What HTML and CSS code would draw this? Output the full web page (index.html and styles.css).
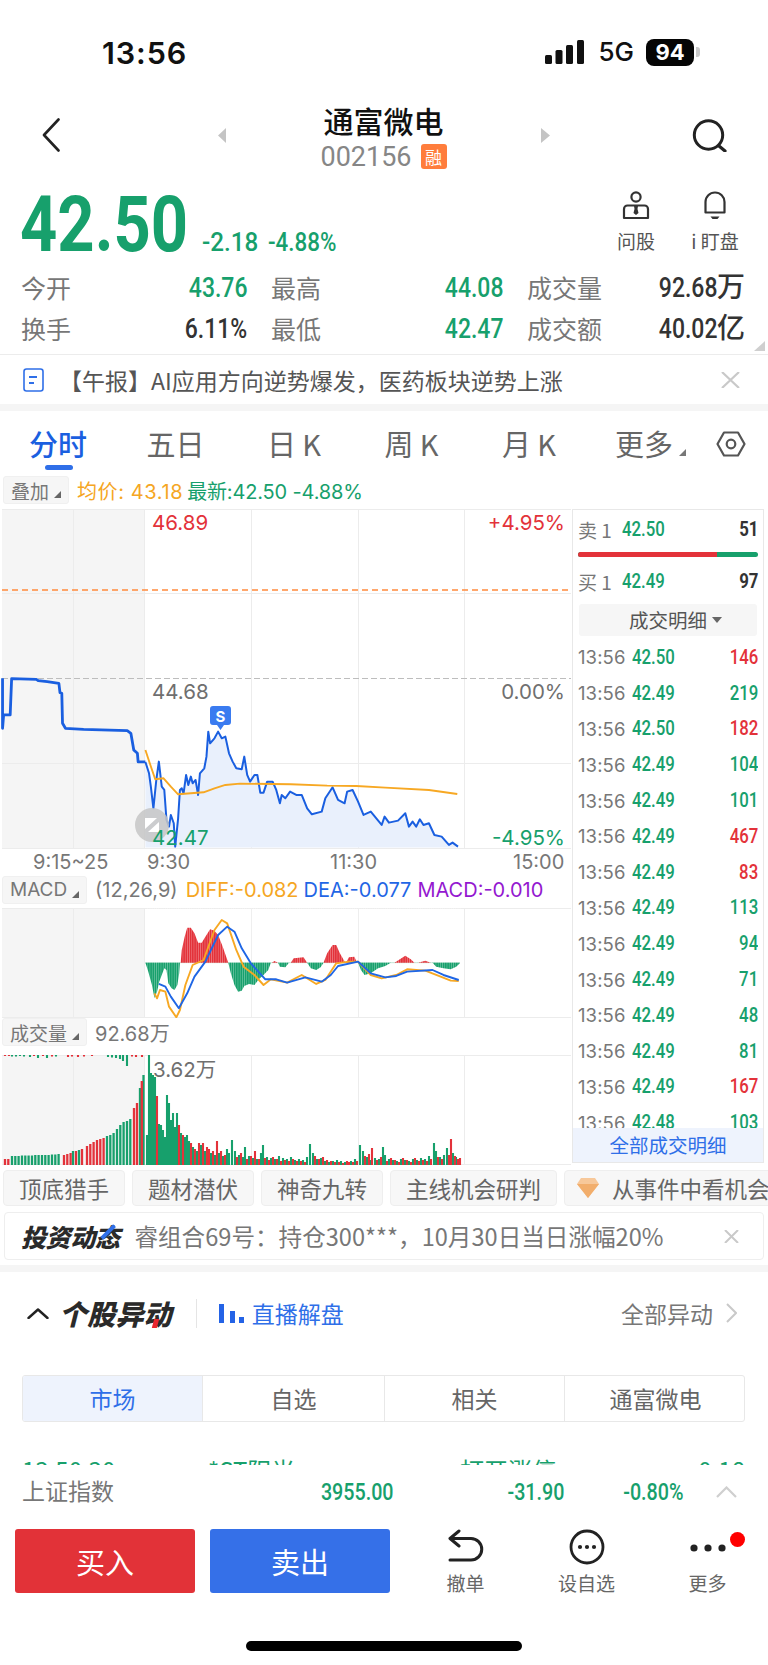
FILE: index.html
```html
<!DOCTYPE html>
<html lang="zh-CN">
<head>
<meta charset="utf-8">
<title>通富微电 002156</title>
<link rel="stylesheet" href="styles.css">
</head>
<body>
<div class="page">

<header class="status">
  <div class="time">13:56</div>
  <div class="status-right">
    <svg class="signal" width="39" height="24" viewBox="0 0 39 24"><rect x="0" y="15" width="7" height="9" rx="1.5"/><rect x="10.5" y="10" width="7" height="14" rx="1.5"/><rect x="21" y="5" width="7" height="19" rx="1.5"/><rect x="32" y="0" width="7" height="24" rx="1.5"/></svg>
    <span class="net">5G</span>
    <span class="batt">94</span><span class="batt-tip"></span>
  </div>
</header>

<nav class="nav">
  <svg width="18" height="34" viewBox="0 0 18 34"><path class="ic" d="M16.5 1.5 2 17l14.5 15.5" stroke-width="2.6"/></svg>
  <span></span>
  <svg width="8" height="15" viewBox="0 0 8 15"><path d="M8 0v15L0 7.5z" fill="#c4c4c4"/></svg>
  <div class="title-wrap">
    <div class="title">通富微电</div>
    <div class="code-row"><span class="code">002156</span><span class="rong">融</span></div>
  </div>
  <svg width="9" height="15" viewBox="0 0 9 15"><path d="M0 0v15l9-7.5z" fill="#c4c4c4"/></svg>
  <span></span>
  <svg width="35" height="33" viewBox="0 0 35 33"><circle class="ic" cx="16.5" cy="16" r="14.2" stroke-width="3"/><path class="ic" d="M27 27l6 5" stroke-width="3.2"/></svg>
</nav>

<section class="quote">
  <div class="price din">42.50</div>
  <div class="change"><span class="din">-2.18</span><span class="din">-4.88%</span></div>
  <div class="quick">
    <div class="quick-item">
      <svg width="28" height="29" viewBox="0 0 28 29"><circle class="ic2" cx="14" cy="6" r="4.6"/><path class="ic2" d="M2 27V18a3.5 3.5 0 0 1 3.5-3.500h17A3.500 3.500 0 0 1 26 18v9z"/><path d="M12 15h4l-.5 3 1 4-2.500 2-2.500-2 1-4z" fill="#333"/></svg>
      <span>问股</span>
    </div>
    <div class="quick-item">
      <svg width="24" height="29" viewBox="0 0 24 29"><path class="ic2" d="M2.500 21.500V11a9.500 9.500 0 0 1 19 0v10.500z"/><path d="M7.500 25.500h9l-2 2.500h-5z" fill="#333"/></svg>
      <span>i 盯盘</span>
    </div>
  </div>
</section>

<section class="stats">
  <span class="lbl">今开</span><span class="val green"><i class="din-r">43.76</i></span>
  <span class="lbl lbl-m">最高</span><span class="val green"><i class="din-r">44.08</i></span>
  <span class="lbl lbl-m">成交量</span><span class="val dark"><i class="din-r">92.68</i>万</span>
  <span class="lbl">换手</span><span class="val dark"><i class="din-r">6.11%</i></span>
  <span class="lbl lbl-m">最低</span><span class="val green"><i class="din-r">42.47</i></span>
  <span class="lbl lbl-m">成交额</span><span class="val dark"><i class="din-r">40.02</i>亿</span>
  <svg class="corner" width="11" height="10" viewBox="0 0 11 10"><path d="M11 0v10H0z" fill="#cfcfcf"/></svg>
</section>

<section class="notice">
  <svg width="21" height="24" viewBox="0 0 21 24"><rect x="1" y="1" width="19" height="22" rx="2.500" fill="none" stroke="#2f6fe8" stroke-width="1.600"/><path d="M6 9h8M6 15h5" stroke="#2f6fe8" stroke-width="1.800"/></svg>
  <span class="notice-text">【午报】AI应用方向逆势爆发，医药板块逆势上涨</span>
  <svg class="notice-x" width="19" height="16" viewBox="0 0 19 16"><path d="M1 0l17 16M18 0 1 16" stroke="#c9c9c9" stroke-width="2.200" fill="none"/></svg>
</section>
<div class="band band-a"></div>

<div class="period">
  <span class="tab active">分时</span>
  <span class="tab">五日</span>
  <span class="tab">日 K</span>
  <span class="tab">周 K</span>
  <span class="tab">月 K</span>
  <span class="tab tab-more">更多<i class="tri tri-dark"></i></span>
  <svg class="hex" width="30" height="26" viewBox="0 0 30 26"><path class="ic3" d="M8 1.500h14L28.500 13 22 24.500H8L1.500 13z"/><circle class="ic3" cx="15" cy="13" r="4.300"/></svg>
</div>

<div class="legend legend-top">
  <span class="pill pill-a">叠加<i class="tri"></i></span>
  <span class="orange avg-txt">均价: 43.18</span>
  <span class="green last-txt">最新:42.50 -4.88%</span>
</div>

<div class="market">
  <div class="charts">
    <svg class="plot" width="571" height="340" viewBox="0 0 571 340">
      <rect x="2" y="0" width="143" height="340" fill="#f5f5f5"/>
      <path class="grid" d="M2 .5H571M2 84.500H571M2 254.500H571M2 339.500H571M73.500 0V340M144.500 0V340M251.500 0V340M358.500 0V340M464.500 0V340"/>
      <path d="M2 81H571" fill="none" stroke="#ff8a3c" stroke-width="1.500" stroke-dasharray="6 4"/>
      <path d="M2 169.500H571" fill="none" stroke="#bdbdbd" stroke-width="1" stroke-dasharray="6 3"/>
      <g transform="translate(0 -99) scale(.3635 .3333)">
        <polygon fill="#e9f0fc" points="400,1313 400,1056 410,1090 415,1130 422,1195 430,1110 437,1055 445,1130 452,1140 458,1230 465,1250 470,1215 478,1240 482,1310 490,1225 495,1140 500,1135 505,1150 512,1095 518,1125 525,1100 530,1120 538,1110 545,1155 550,1090 562,1075 568,1040 573,965 578,1000 590,985 600,965 610,985 620,980 630,1030 640,1055 650,1075 665,1078 672,1040 680,1095 688,1115 700,1095 708,1095 716,1148 725,1148 735,1115 750,1115 760,1140 770,1180 775,1155 785,1165 798,1145 815,1155 830,1155 845,1195 858,1213 885,1205 895,1165 915,1132 930,1170 948,1180 955,1145 970,1140 985,1175 1000,1215 1020,1205 1050,1245 1058,1220 1070,1238 1095,1232 1115,1210 1125,1250 1135,1235 1145,1250 1155,1228 1165,1245 1180,1240 1195,1275 1215,1280 1235,1305 1245,1298 1260,1310 1260,1313"/>
        <polyline class="line line-pre" points="7,805 7,955 10,915 28,915 32,806 100,808 105,812 130,815 162,820 165,848 170,850 172,940 180,955 230,958 350,962 360,970 368,1020 378,1030 380,1056 400,1056"/>
        <polyline class="line" points="400,1056 410,1090 415,1130 422,1195 430,1110 437,1055 445,1130 452,1140 458,1230 465,1250 470,1215 478,1240 482,1310 490,1225 495,1140 500,1135 505,1150 512,1095 518,1125 525,1100 530,1120 538,1110 545,1155 550,1090 562,1075 568,1040 573,965 578,1000 590,985 600,965 610,985 620,980 630,1030 640,1055 650,1075 665,1078 672,1040 680,1095 688,1115 700,1095 708,1095 716,1148 725,1148 735,1115 750,1115 760,1140 770,1180 775,1155 785,1165 798,1145 815,1155 830,1155 845,1195 858,1213 885,1205 895,1165 915,1132 930,1170 948,1180 955,1145 970,1140 985,1175 1000,1215 1020,1205 1050,1245 1058,1220 1070,1238 1095,1232 1115,1210 1125,1250 1135,1235 1145,1250 1155,1228 1165,1245 1180,1240 1195,1275 1215,1280 1235,1305 1245,1298 1260,1310"/>
        <polyline class="line line-avg" points="400,1020 412,1060 427,1108 450,1105 470,1130 490,1153 560,1147 590,1135 620,1125 660,1121 800,1123 900,1127 980,1128 1060,1133 1180,1140 1258,1152"/>
      </g>
      <circle cx="152" cy="316" r="17" fill="#c6c6c6" opacity=".85"/>
      <path d="M145 309h12l-12 11zM159 313v10h-11z" fill="#fff"/>
      <path d="M213 197h15a3 3 0 0 1 3 3v13a3 3 0 0 1-3 3h-4l-3.500 5-3.500-5h-4a3 3 0 0 1-3-3v-13a3 3 0 0 1 3-3z" fill="#3a7bf0"/>
      <text class="mk" x="220.500" y="213">S</text>
      <text class="lb red" x="152" y="20.500">46.89</text>
      <text class="lb end red" x="565" y="20.500">+4.95%</text>
      <text class="lb gray" x="152" y="190">44.68</text>
      <text class="lb end gray" x="565" y="190">0.00%</text>
      <text class="lb green" x="152" y="336">42.47</text>
      <text class="lb end green" x="565" y="336">-4.95%</text>
    </svg>

    <div class="axis"><span>9:15~25</span><span>9:30</span><span>11:30</span><span>15:00</span></div>

    <div class="legend legend-sub">
      <span class="pill pill-b">MACD<i class="tri"></i></span>
      <span class="gray">(12,26,9)</span>
      <span class="orange">DIFF:-0.082</span>
      <span class="blue">DEA:-0.077</span>
      <span class="purple">MACD:-0.010</span>
    </div>

    <svg class="plot plot-macd" width="571" height="110" viewBox="0 0 571 110">
      <defs><pattern id="stripes" width="2.200" height="10" patternUnits="userSpaceOnUse"><rect width=".7" height="10" fill="#fff" opacity=".35"/></pattern></defs>
      <rect x="2" y="0" width="143" height="110" fill="#f5f5f5"/>
      <path class="grid" d="M2 .5H571M2 109.500H571M73.500 0V110M144.500 0V110M251.500 0V110M358.500 0V110M464.500 0V110"/>
      <g transform="translate(0 -48) scale(.3635 .3333)">
        <path d="M400 308H1265" stroke="#bfe3d3" stroke-width="1" vector-effect="non-scaling-stroke"/>
        <path class="fill-g" d="M400 308L408 335 418 375 425 415 432 395 438 365 445 345 452 325 458 330 463 370 472 385 480 390 488 375 493 340 495 308ZM628 308L635 340 645 375 655 395 665 392 672 378 685 372 700 375 712 358 725 345 738 330 745 308ZM765 308L770 320 785 322 795 308ZM845 308L855 325 870 330 882 322 890 308ZM985 308L993 330 1003 345 1020 340 1040 325 1060 318 1075 308ZM1190 308L1200 320 1220 325 1240 328 1255 320 1265 310V308Z"/>
        <path class="fill-r" d="M497 308L500 270 508 230 515 203 525 203 535 220 545 248 555 248 565 230 578 208 590 212 600 225 612 258 628 308ZM748 308L755 303 765 308ZM800 308L808 295 835 292 845 308ZM890 308L900 280 915 255 925 255 935 280 950 308ZM952 308L960 292 975 290 982 308ZM1085 308L1100 298 1115 287 1130 298 1140 308ZM1150 308L1170 302 1185 308Z"/>
      </g>
      <rect x="146" y="0" width="315" height="109" fill="url(#stripes)"/>
      <g transform="translate(0 -48) scale(.3635 .3333)">
        <polyline class="line line-avg" points="425,400 432,415 440,390 455,395 465,440 485,472 495,450 510,375 530,315 560,300 590,210 610,180 625,190 650,270 670,320 700,345 725,375 745,358 790,368 830,345 870,372 895,360 925,310 960,305 985,305 1020,345 1050,355 1090,345 1120,328 1170,332 1200,345 1240,362 1262,363"/>
        <polyline class="line line-dea" points="437,372 455,380 470,410 492,445 515,400 535,350 565,305 600,225 625,200 645,215 665,265 690,310 730,358 760,358 790,368 840,352 885,365 910,345 930,318 985,305 1020,340 1060,352 1090,348 1120,335 1190,330 1220,345 1262,360"/>
      </g>
    </svg>

    <div class="legend legend-vol">
      <span class="pill pill-b">成交量<i class="tri"></i></span>
      <span class="gray">92.68万</span>
    </div>

    <svg class="plot" width="571" height="110" viewBox="0 0 571 110">
      <rect x="2" y="0" width="143" height="110" fill="#f5f5f5"/>
      <path class="grid" d="M2 .5H571M2 109.500H571M73.500 0V110M144.500 0V110M251.500 0V110M358.500 0V110M464.500 0V110"/>
      <path class="bar bar-g" d="M12 0v1.500M16 0v1.500M20 0v1M24 0v1.500M30 0v2M38 0v3M47 0v3M56 0v1.500M108 0v2M112 0v2.500M116 0v3M120 0v4M123 0v6M127 0v11"/>
      <path class="bar bar-r" d="M5 0v1M9 0v1M34 0v1M43 0v1M52 0v1.500M68 0v2M72 0v1.500M78 0v2M84 0v1.500M92 0v1M132 0v1.500M136 0v2M142 0v2"/>
      <path class="bar bar-w bar-g" d="M12 110v-9M15.300 110v-9M18.600 110v-9M22 110v-9.500M25.300 110v-9.500M28.600 110v-9.500M32 110v-9.500M35.300 110v-10M38.600 110v-10M42 110v-10M45.300 110v-10M48.600 110v-10M52 110v-10.500M55.300 110v-10.500M58.600 110v-11M73 110v-14M79 110v-15M107 110v-29M110.300 110v-30M113.600 110v-32M117 110v-36M120.300 110v-40M123.600 110v-43M127 110v-44M130.300 110v-46M140 110v-77M143.500 110v-90"/>
      <path class="bar bar-w bar-r" d="M5 110v-6M8.300 110v-6M64 110v-10M67.300 110v-11M70.600 110v-12M76 110v-14M82 110v-16M87 110v-19M90.300 110v-21M93.600 110v-23M97 110v-25M100.300 110v-26M103.600 110v-27M134 110v-57M137 110v-62M141.800 110v-84"/>
      <path class="bar bar-g" d="M147 110v-30M149 110v-110M151 110v-92M153 110v-90M155 110v-88M159 110v-41M161 110v-40M163 110v-35M165 110v-28M167 110v-70M169 110v-62M171 110v-45M173 110v-52M175 110v-38M177 110v-52M181 110v-32M185 110v-28M187 110v-30M189 110v-24M193 110v-18M197 110v-14M201 110v-20M205 110v-14M211 110v-12M215 110v-10M219 110v-12M223 110v-9M227 110v-16M229 110v-12M232 110v-25M235 110v-14M239 110v-10M243 110v-8M245 110v-18M249 110v-9M253 110v-7M257 110v-6M261 110v-12M263 110v-20M267 110v-8M271 110v-7M275 110v-6M279 110v-9M283 110v-7M287 110v-6M291 110v-8M295 110v-5M299 110v-6M303 110v-5M307 110v-8M310 110v-21M313 110v-12M317 110v-6M321 110v-7M325 110v-4M329 110v-3M333 110v-4M337 110v-5M341 110v-4M345 110v-3M351 110v-4M355 110v-6M360 110v-20M363 110v-14M367 110v-8M371 110v-5M375 110v-7M379 110v-6M383 110v-18M385 110v-10M389 110v-6M393 110v-5M397 110v-4M401 110v-6M405 110v-5M409 110v-4M413 110v-6M417 110v-5M421 110v-7M425 110v-6M429 110v-9M434 110v-22M436 110v-14M440 110v-8M444 110v-10M447 110v-17M453 110v-12M456 110v-8"/>
      <path class="bar bar-r" d="M157 110v-69M179 110v-40M183 110v-30M191 110v-22M195 110v-16M199 110v-22M203 110v-22M207 110v-18M209 110v-16M213 110v-14M217 110v-24M221 110v-14M225 110v-10M237 110v-8M241 110v-12M247 110v-6M251 110v-9M255 110v-14M259 110v-6M265 110v-7M269 110v-5M273 110v-8M277 110v-6M281 110v-4M285 110v-5M289 110v-4M293 110v-6M297 110v-4M301 110v-4M305 110v-3M315 110v-9M319 110v-6M323 110v-8M327 110v-5M331 110v-4M335 110v-3M339 110v-3M343 110v-2M347 110v-4M349 110v-3M353 110v-3M357 110v-4M365 110v-9M369 110v-11M372 110v-17M377 110v-5M381 110v-8M387 110v-4M391 110v-7M395 110v-5M399 110v-3M403 110v-7M407 110v-5M411 110v-3M415 110v-7M419 110v-4M423 110v-5M427 110v-4M431 110v-6M438 110v-8M442 110v-6M449 110v-10M451 110v-26M455 110v-9M458 110v-6M460 110v-7"/>
      <text class="lb gray" x="153" y="22">3.62万</text>
    </svg>
  </div>

  <aside class="panel">
    <div class="book"><span class="bk-lbl">卖 1</span><span class="din-p green">42.50</span><span class="bk-n">51</span></div>
    <div class="ratio"><span class="ratio-bid"></span></div>
    <div class="book book-2"><span class="bk-lbl">买 1</span><span class="din-p green">42.49</span><span class="bk-n">97</span></div>
    <div class="detail-btn">成交明细<i class="caret"></i></div>
    <div class="ticks">
      <div class="tick"><span class="t">13:56</span><span class="din-p green">42.50</span><b class="red">146</b></div>
      <div class="tick"><span class="t">13:56</span><span class="din-p green">42.49</span><b class="green">219</b></div>
      <div class="tick"><span class="t">13:56</span><span class="din-p green">42.50</span><b class="red">182</b></div>
      <div class="tick"><span class="t">13:56</span><span class="din-p green">42.49</span><b class="green">104</b></div>
      <div class="tick"><span class="t">13:56</span><span class="din-p green">42.49</span><b class="green">101</b></div>
      <div class="tick"><span class="t">13:56</span><span class="din-p green">42.49</span><b class="red">467</b></div>
      <div class="tick"><span class="t">13:56</span><span class="din-p green">42.49</span><b class="red">83</b></div>
      <div class="tick"><span class="t">13:56</span><span class="din-p green">42.49</span><b class="green">113</b></div>
      <div class="tick"><span class="t">13:56</span><span class="din-p green">42.49</span><b class="green">94</b></div>
      <div class="tick"><span class="t">13:56</span><span class="din-p green">42.49</span><b class="green">71</b></div>
      <div class="tick"><span class="t">13:56</span><span class="din-p green">42.49</span><b class="green">48</b></div>
      <div class="tick"><span class="t">13:56</span><span class="din-p green">42.49</span><b class="green">81</b></div>
      <div class="tick"><span class="t">13:56</span><span class="din-p green">42.49</span><b class="red">167</b></div>
      <div class="tick"><span class="t">13:56</span><span class="din-p green">42.48</span><b class="green">103</b></div>
    </div>
    <div class="all-ticks">全部成交明细</div>
  </aside>
</div>

<div class="chips">
  <span class="chip">顶底猎手</span>
  <span class="chip">题材潜伏</span>
  <span class="chip">神奇九转</span>
  <span class="chip">主线机会研判</span>
  <span class="chip chip-gem"><svg width="22" height="20" viewBox="0 0 22 20"><path d="M4 0h14l4 6-11 14L0 6z" fill="#f7c89a"/><path d="M0 6h22L11 20z" fill="#f2ae6c"/></svg>从事件中看机会</span>
</div>

<div class="invest">
  <span class="invest-logo">投资动态</span>
  <span class="invest-text">睿组合69号：持仓300***，10月30日当日涨幅20%</span>
  <svg class="invest-x" width="15" height="13" viewBox="0 0 15 13"><path d="M1 0l13 13M14 0 1 13" stroke="#c9c9c9" stroke-width="2" fill="none"/></svg>
</div>
<div class="band band-b"></div>

<div class="sec-head">
  <svg width="22" height="11" viewBox="0 0 22 11"><path class="ic" d="M1.500 10 11 1.500 20.500 10" stroke-width="2.400"/></svg>
  <span class="sec-title">个股异动</span>
  <span class="sec-div"></span>
  <svg width="25" height="19" viewBox="0 0 25 19"><path d="M0 0h5v19H0zM11 7h5v12h-5zM20 13h5v6h-5z" fill="#2463e6"/></svg>
  <span class="sec-live">直播解盘</span>
  <span class="sec-all">全部异动</span>
  <svg width="11" height="20" viewBox="0 0 11 20"><path d="M1 1l9 9-9 9" fill="none" stroke="#c9c9c9" stroke-width="2"/></svg>
</div>

<div class="seg">
  <span class="seg-item on">市场</span>
  <span class="seg-item">自选</span>
  <span class="seg-item">相关</span>
  <span class="seg-item">通富微电</span>
</div>

<div class="clip-row green">
  <span>13:50:30</span><span>*ST阳光</span><span>打开涨停</span><span>0.18</span>
</div>

<footer class="dock">
  <div class="index-row">
    <span class="index-name">上证指数</span>
    <span class="idx"><i class="din-r">3955.00</i></span>
    <span class="idx"><i class="din-r">-31.90</i></span>
    <span class="idx"><i class="din-r">-0.80%</i></span>
    <svg class="idx-up" width="21" height="12" viewBox="0 0 21 12"><path d="M1 11 10.500 1.500 20 11" fill="none" stroke="#cfcfcf" stroke-width="2.200"/></svg>
  </div>
  <div class="actions">
    <button class="trade buy">买入</button>
    <button class="trade sell">卖出</button>
    <div class="tool">
      <svg width="36" height="36" viewBox="0 0 36 36"><path class="ic" d="M11 2 2 9.500l9 7.500M2.500 9.500H23a10.500 10.500 0 0 1 0 21.500H2" stroke-width="3"/></svg>
      <span>撤单</span>
    </div>
    <div class="tool">
      <svg width="36" height="36" viewBox="0 0 36 36"><circle class="ic" cx="18" cy="18" r="16" stroke-width="2.800"/><circle cx="11" cy="18" r="2.100" fill="#222"/><circle cx="18" cy="18" r="2.100" fill="#222"/><circle cx="25" cy="18" r="2.100" fill="#222"/></svg>
      <span>设自选</span>
    </div>
    <div class="tool tool-more">
      <svg width="36" height="36" viewBox="0 0 36 36"><circle cx="4" cy="19" r="3.600" fill="#222"/><circle cx="18" cy="19" r="3.600" fill="#222"/><circle cx="32" cy="19" r="3.600" fill="#222"/></svg>
      <span>更多</span>
      <i class="dot"></i>
    </div>
  </div>
  <div class="home"></div>
</footer>

</div>
</body>
</html>
```

FILE: styles.css
```css
:root{
  --green:#17a06c;
  --red:#e3323a;
  --blue:#2f6fe8;
  --cn:"Inter","Noto Sans CJK SC",sans-serif;
}
*{box-sizing:border-box}
html,body{margin:0;padding:0;background:#fff}
body{font-family:var(--cn);color:#333}
i{font-style:normal}
.page{width:768px;height:1665px;overflow:hidden;position:relative}
.green{color:var(--green);fill:var(--green)}
.red{color:var(--red);fill:var(--red)}
.orange{color:#f5a623}
.blue{color:#1f66e5}
.purple{color:#9418d0}
.gray{color:#777;fill:#6f6f6f}
.dark{color:#333}

/* status bar */
.status{height:90px;display:flex;align-items:flex-start;padding:37px 68px 0 102px;justify-content:space-between}
.time{font-size:30.500px;font-weight:600;line-height:30px;color:#111;letter-spacing:.9px;margin-top:1px}
.status-right{display:flex;align-items:center;margin-top:1px}
.signal{fill:#111;margin-right:14px}
.net{font-size:26px;font-weight:500;line-height:28px;color:#111;margin-right:12px}
.batt{width:48px;height:27px;border-radius:8px;background:#050505;color:#fff;font-size:22px;font-weight:700;line-height:27px;text-align:center}
.batt-tip{width:4px;height:10px;background:#c9c9c9;border-radius:0 3px 3px 0;margin-left:2px}

/* nav */
.nav{height:85px;display:grid;grid-template-columns:18px 158px 8px 315px 9px 142px 35px;padding:5px 0 0 42px;align-items:center}
.ic{fill:none;stroke:#222;stroke-linecap:round;stroke-linejoin:round}
.title-wrap{display:flex;flex-direction:column;align-items:center;margin-top:4px}
.title{font-size:30px;font-weight:500;line-height:36px;color:#111}
.code-row{display:flex;align-items:center;gap:9px;margin-top:3px}
.code{font-family:Roboto,sans-serif;font-size:27px;line-height:28px;color:#868686}
.rong{width:26px;height:25px;border-radius:3px;background:#ff7d3c;color:#fff;font-size:17px;line-height:25px;text-align:center;font-family:"Noto Sans CJK SC",sans-serif}

/* quote */
.din,.din-r{display:inline-block;font-family:Roboto,sans-serif;font-style:normal}
.din{transform:scaleX(.845);transform-origin:left center}
.din-r{transform:scaleX(.82);transform-origin:right center}
.quote{height:102px;display:flex;position:relative}
.price{font-size:77px;font-weight:700;line-height:77px;color:var(--green);margin:12px 0 0 20px;width:182px}
.change{display:flex;color:var(--green);font-size:26px;line-height:30px;margin-top:52px;font-weight:500}
.change .din{transform:scaleX(.93)}
.change .din:first-child{width:66px}
.change .din:last-child{transform:scaleX(.86)}
.quick{margin-left:auto;display:flex;margin-right:26px;margin-top:16px;gap:25px}
.quick-item{display:flex;flex-direction:column;align-items:center;width:54px;font-size:19px;line-height:24px;color:#555;white-space:nowrap;font-family:"Noto Sans CJK SC",sans-serif}
.quick-item svg{margin-bottom:9px}
.ic2{fill:none;stroke:#333;stroke-width:2.200;stroke-linejoin:round}

/* stats */
.stats{display:grid;grid-template-columns:100px 126px 124px 132px 123px 119px;grid-auto-rows:41px;padding-left:21px;height:86px;margin-top:-9px;position:relative;align-items:center;align-content:start}
.lbl{font-size:25px;color:#777;line-height:30px;font-family:"Noto Sans CJK SC",sans-serif;white-space:nowrap;margin-top:-4px}
.lbl-m{padding-left:24px}
.val{font-family:Roboto,"Noto Sans CJK SC",sans-serif;font-size:28px;line-height:30px;text-align:right;font-weight:500;white-space:nowrap;margin:-2px 0 0 1px}
.corner{position:absolute;right:3px;top:73px}

/* notice */
.notice{height:50px;border-top:1px solid #ececec;display:flex;align-items:center;padding-left:23px;position:relative}
.notice-text{font-size:23px;color:#555;margin-left:15px;white-space:nowrap;font-family:"Noto Sans CJK SC",sans-serif}
.notice-x{margin-left:auto;margin-right:28px}
.band{background:#f5f5f5}
.band-a{height:7px}
.band-b{height:7px;margin-top:5px}

/* periods */
.period{height:65px;display:grid;grid-template-columns:116px 119px 118px 117px 118px 114px 58px;align-items:center}
.tab{font-size:29px;color:#666;text-align:center;line-height:36px;position:relative;white-space:nowrap;font-family:"Noto Sans CJK SC",sans-serif;top:-1px}
.tab.active{color:#1a5fe0;font-weight:500}
.tab.active::after{content:"";position:absolute;left:45px;width:28px;top:40px;height:5px;border-radius:3px;background:var(--blue)}
.tab-more{padding-left:11px}
.hex{margin-left:14px}
.tri{display:inline-block;width:0;height:0;border-style:solid;border-width:0 0 7px 7px;border-color:transparent transparent #666 transparent;margin-left:5px}
.tri-dark{margin-left:6px;border-bottom-color:#777}
.ic3{fill:none;stroke:#555;stroke-width:2.200;stroke-linejoin:round}

/* legends */
.legend{display:flex;align-items:center;white-space:nowrap;font-size:20px}
.legend-top{height:33px;padding-left:3px;gap:8px;padding-bottom:5px}
.avg-txt{letter-spacing:.6px}
.last-txt{letter-spacing:-.15px;margin-left:-4px}
.pill{display:inline-flex;align-items:center;height:28px;background:#f6f6f6;border-radius:3px;border:1px solid #f0f0f0;color:#777;font-size:19px;padding-left:7px;font-family:Inter,"Noto Sans CJK SC",sans-serif}
.pill .tri{margin-top:9px}
.pill-a{width:66px}
.pill-b{width:85px}
.legend-sub{height:33px;padding-left:2px;gap:8px;padding-bottom:4px}
.legend-sub .blue{margin-left:-3px}
.legend-sub .purple{margin-left:-2px}
.legend-vol{height:37px;padding-left:2px;gap:8px;padding-bottom:9px}

/* charts */
.market{display:flex;height:655px}
.charts{width:571px;flex:none}
.plot{display:block}
.grid{fill:none;stroke:#ececec;stroke-width:1}
.line{fill:none;stroke:#1a5fe0;stroke-width:2;stroke-linejoin:round;vector-effect:non-scaling-stroke}
.line-pre{stroke-width:2.800}
.line-avg{stroke:#f7a823;stroke-width:1.900}
.line-dea{stroke:#1f66e5;stroke-width:1.900}
.fill-g{fill:var(--green)}
.fill-r{fill:var(--red)}
.bar{fill:none;stroke-width:2.100}
.bar-w{stroke-width:2.300}
.bar-g{stroke:var(--green)}
.bar-r{stroke:var(--red)}
.lb{font-family:Inter,"Noto Sans CJK SC",sans-serif;font-size:20.500px}
.end{text-anchor:end}
.mk{font-family:Inter,sans-serif;font-size:15px;font-weight:700;fill:#fff;text-anchor:middle}
.axis{height:26px;display:grid;grid-template-columns:114px 183px 183px auto;padding-left:33px;font-size:20px;color:#777;line-height:26px;white-space:nowrap}

/* right panel */
.panel{width:192px;margin-left:1px;flex:none;height:654px;border:1px solid #e8e8e8;padding:0 5px;display:flex;flex-direction:column;position:relative;overflow:hidden}
.book{height:38px;display:flex;align-items:center;flex:none}
.book-2{margin-top:5px}
.bk-lbl{width:44px;font-size:19px;color:#777;font-family:"Noto Sans CJK SC",sans-serif}
.din-p{display:inline-block;font-family:Roboto,sans-serif;font-size:19.500px;font-weight:500;transform:scaleX(.86);transform-origin:left center}
.bk-n{margin-left:auto;font-family:Roboto,sans-serif;font-size:19.500px;font-weight:700;color:#333;transform:scaleX(.86);transform-origin:right center}
.ratio{height:5px;flex:none;margin-top:4px;background:var(--green);border-radius:3px;overflow:hidden}
.ratio-bid{display:block;width:139px;height:5px;background:var(--red)}
.detail-btn{flex:none;height:32px;margin:4px 1px 0;background:#f6f6f6;border-radius:3px;color:#555;font-size:19.500px;line-height:32px;text-align:center;font-family:"Noto Sans CJK SC",sans-serif;display:flex;align-items:center;justify-content:center;padding-left:15px}
.caret{width:0;height:0;border-style:solid;border-width:6px 5px 0;border-color:#666 transparent transparent;margin-left:5px}
.ticks{margin-top:3.500px;flex:1;overflow:hidden;min-height:0}
.tick{height:35.800px;display:grid;grid-template-columns:54px 1fr auto;align-items:center}
.t{font-size:18.500px;color:#777;letter-spacing:.1px}
.tick b{font-family:Roboto,sans-serif;font-size:19.500px;font-weight:500;transform:scaleX(.86);transform-origin:right center}
.all-ticks{flex:none;height:34px;margin:0 -5px;background:#eef3fd;color:var(--blue);font-size:19.500px;text-align:center;line-height:33px;font-family:"Noto Sans CJK SC",sans-serif}

/* chips */
.chips{display:flex;gap:7px;margin:6px 0 0 3px;height:36px;white-space:nowrap;overflow:hidden}
.chip{flex:none;height:36px;padding:0 15px;background:#f7f7f7;border:1px solid #eee;border-radius:4px;font-size:22.500px;color:#666;line-height:34px;font-family:"Noto Sans CJK SC",sans-serif}
.chip-gem{display:flex;align-items:center;padding-left:12px;gap:13px}

/* invest */
.invest{margin:6px 0 0 4px;width:760px;height:48px;border:1px solid #eee;border-radius:4px;display:flex;align-items:center;padding-left:16px;white-space:nowrap}
.invest-logo{font-size:25px;font-weight:900;font-style:italic;color:#2a2a2a;font-family:"Noto Sans CJK SC",sans-serif;position:relative;letter-spacing:-.4px}
.invest-logo::after{content:"";position:absolute;left:78px;top:12px;width:18px;height:3.500px;background:var(--blue);transform:rotate(-45deg)}
.invest-text{margin-left:15px;font-size:23.600px;color:#777;font-family:"Noto Sans CJK SC",sans-serif}
.invest-x{margin-left:auto;margin-right:24px}

/* section head */
.sec-head{height:82px;display:flex;align-items:center;padding-left:27px;white-space:nowrap}
.sec-title{margin-left:10px;font-size:28px;font-weight:900;font-style:italic;color:#2a2a2a;font-family:"Noto Sans CJK SC",sans-serif;position:relative;letter-spacing:.2px}
.sec-title::after{content:"";position:absolute;left:94px;top:26px;width:5px;height:9px;background:#e8262f;transform:skewX(-15deg)}
.sec-div{width:1px;height:29px;background:#e5e5e5;margin:0 22px 0 24px}
.sec-live{margin-left:8px;font-size:23px;color:var(--blue);font-family:"Noto Sans CJK SC",sans-serif}
.sec-all{margin-left:auto;font-size:23px;color:#777;font-family:"Noto Sans CJK SC",sans-serif;margin-right:13px}
.sec-head svg:last-child{margin-right:31px}

/* seg tabs */
.seg{margin:21px 23px 0 22px;height:47px;display:grid;grid-template-columns:179px 182px 180px 182px;border:1px solid #e8e8e8;border-radius:3px;overflow:hidden}
.seg-item{font-size:23px;color:#666;text-align:center;line-height:44px;border-left:1px solid #e8e8e8;font-family:"Noto Sans CJK SC",sans-serif}
.seg-item:first-child{border-left:0}
.seg-item.on{background:#eef3fd;color:var(--blue)}

/* clipped row */
.clip-row{height:43px;overflow:hidden;padding:33px 23px 0 22px;display:grid;grid-template-columns:186px 252px 1fr auto;font-size:24px;line-height:30px;font-family:"Noto Sans CJK SC",sans-serif}

/* dock */
.dock{background:#fff}
.index-row{height:54px;display:grid;grid-template-columns:200px 172px 170px 119px 54px;padding-left:22px;align-items:center;margin-bottom:10px}
.index-name{font-size:23px;color:#777;font-family:"Noto Sans CJK SC",sans-serif;margin-top:-4px}
.idx{font-size:24px;text-align:right;color:var(--green);font-weight:500;white-space:nowrap;margin-top:-1px}
.idx-up{justify-self:end}
.actions{display:flex;padding-left:15px;height:64px;align-items:flex-start}
.trade{width:180px;height:64px;border:0;border-radius:3px;color:#fff;font-size:29px;font-family:"Noto Sans CJK SC",sans-serif}
.buy{background:#e23238}
.sell{background:#3570e8;margin-left:15px;margin-right:15px}
.tool{width:121px;display:flex;flex-direction:column;align-items:center;font-size:19px;color:#666;position:relative;font-family:"Noto Sans CJK SC",sans-serif;line-height:22px}
.tool svg{margin-bottom:7px}
.dot{position:absolute;left:83px;top:3px;width:15px;height:15px;border-radius:50%;background:#f00}
.home{width:276px;height:10px;border-radius:5px;background:#000;margin:48px auto 0}
```
